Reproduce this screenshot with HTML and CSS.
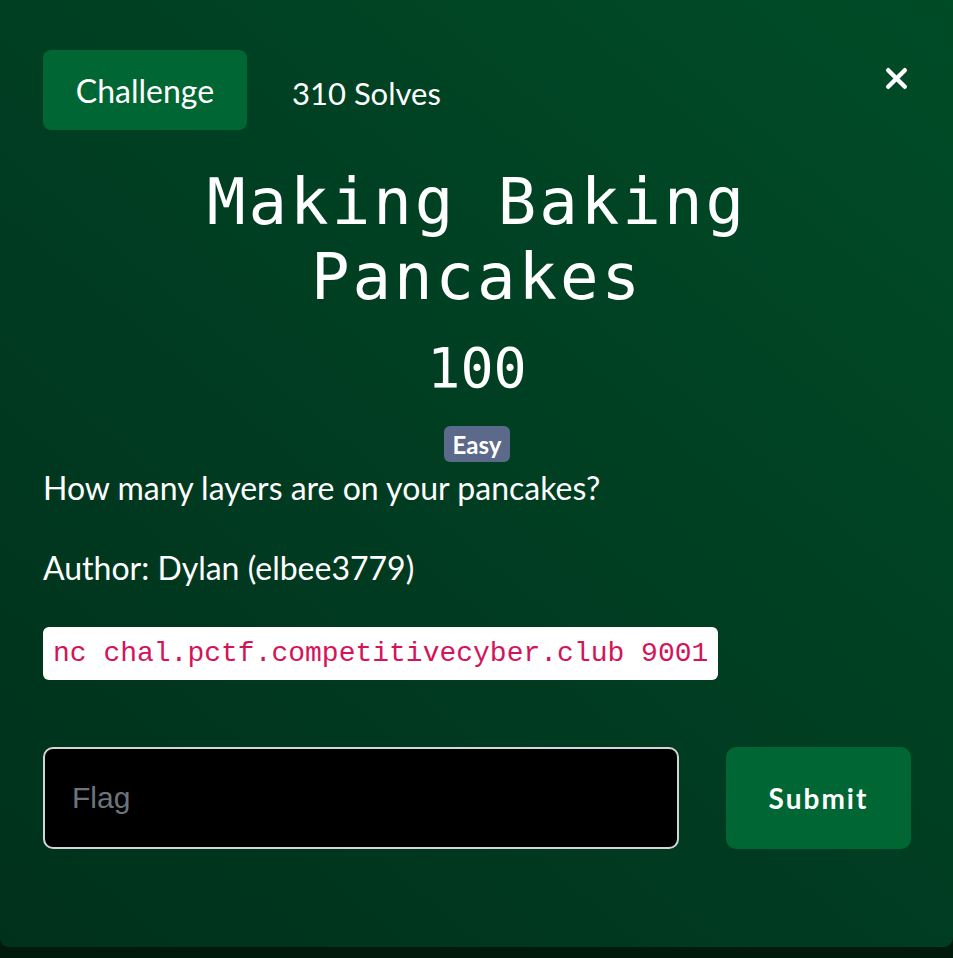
FILE: index.html
```html
<!DOCTYPE html>
<html lang="en">
<head>
<meta charset="utf-8">
<title>Making Baking Pancakes</title>
<link rel="stylesheet" href="styles.css">
</head>
<body>
<div class="modal">
  <div class="modal-header">
    <div class="tab">Challenge</div>
    <div class="solves">310 Solves</div>
    <button class="close" aria-label="Close">
      <svg width="23" height="23" viewBox="0 0 23 23"><path d="M3.2 3.2 L19.8 19.8 M19.8 3.2 L3.2 19.8" stroke="#fff" stroke-width="4.4" stroke-linecap="round"/></svg>
    </button>
  </div>
  <h2 class="title">Making Baking Pancakes</h2>
  <h3 class="value">100</h3>
  <div class="tags"><span class="badge">Easy</span></div>
  <div class="desc">
    <p>How many layers are on your pancakes?</p>
    <p>Author: Dylan (elbee3779)</p>
    <div class="cmd-row"><code class="cmd">nc chal.pctf.competitivecyber.club 9001</code></div>
  </div>
  <form class="submit-row">
    <input class="flag" type="text" placeholder="Flag">
    <button class="submit" type="button">Submit</button>
  </form>
</div>
</body>
</html>
```

FILE: styles.css
```css
* { box-sizing: border-box; }
html, body { margin: 0; padding: 0; }
body {
  background: #021a0c;
  font-family: Lato, "Noto Sans", sans-serif;
  color: #fff;
  width: 953px;
  height: 958px;
  overflow: hidden;
}
.modal {
  width: 953px;
  height: 947px;
  border-radius: 0 0 9px 9px;
  background: linear-gradient(40deg, #00311b 0%, #003c21 45%, #004c27 100%);
  padding: 50px 42px 0 43px;
}
.modal-header {
  display: flex;
  align-items: center;
  height: 80px;
}
.tab {
  width: 204px;
  height: 80px;
  background: #006633;
  border-radius: 8px;
  display: flex;
  align-items: center;
  justify-content: center;
  font-size: 32px;
}
.solves {
  margin-left: 45px;
  padding-top: 5px;
  font-size: 31px;
}
.close {
  margin-left: auto;
  align-self: flex-start;
  margin-top: 17px;
  margin-right: 3px;
  padding: 0;
  border: 0;
  background: none;
  width: 23px;
  height: 23px;
  display: block;
}
.close svg { display: block; }
.title {
  margin: 35px 0 0;
  text-align: center;
  font-family: "DejaVu Sans Mono", monospace;
  font-weight: normal;
  font-size: 64px;
  letter-spacing: 3px;
  line-height: 75px;
}
.value {
  margin: 20px 0 0;
  text-align: center;
  font-family: "DejaVu Sans Mono", monospace;
  font-weight: normal;
  font-size: 55px;
  line-height: 66px;
}
.tags {
  margin-top: 25px;
  display: flex;
  justify-content: center;
}
.badge {
  background: #5b6a8b;
  border-radius: 6px;
  height: 36px;
  padding: 0 9px;
  display: flex;
  align-items: center;
  font-size: 24px;
  font-weight: 700;
}
.desc {
  margin-top: 2px;
  font-size: 32px;
  line-height: 48px;
}
.desc p { margin: 0 0 32px; }
.desc p:nth-of-type(2) { margin-bottom: 0; }
.cmd-row {
  margin-top: 35px;
  display: flex;
}
.cmd {
  display: block;
  background: #fff;
  color: #d4145a;
  font-family: "Liberation Mono", monospace;
  font-size: 28px;
  line-height: 53px;
  height: 53px;
  padding: 0 10px;
  border-radius: 6px;
}
.submit-row {
  display: flex;
  gap: 47px;
  margin-top: 67px;
}
.flag {
  width: 636px;
  height: 102px;
  background: #000;
  border: 2px solid #d2d6da;
  border-radius: 10px;
  padding: 0 27px;
  font-family: "Liberation Sans", Arial, sans-serif;
  font-size: 30px;
  color: #fff;
  outline: none;
}
.flag::placeholder { color: #6c757d; }
.submit {
  width: 185px;
  height: 102px;
  background: #006633;
  border: 0;
  border-radius: 10px;
  color: #fff;
  font-family: Lato, sans-serif;
  font-weight: 700;
  font-size: 28px;
  letter-spacing: 2px;
}
```
